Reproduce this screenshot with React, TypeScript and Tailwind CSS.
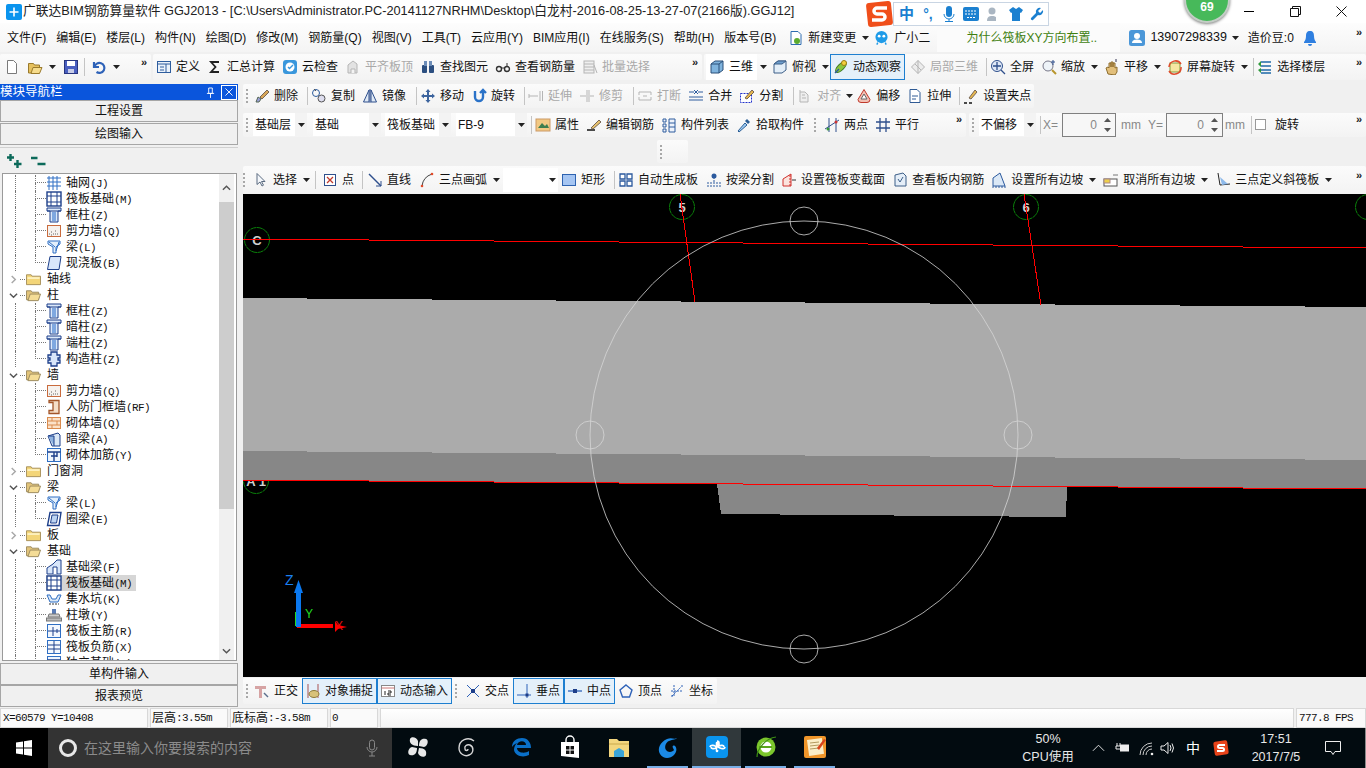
import React, { FC, ReactNode } from "react";

const B = "#2f6fc4";
const D = "#1d3f8a";
const G = "#b5b5b5";

const icons: Record<string, ReactNode> = {
  file: <path d="M3.5 1.5h6l3 3v10h-9z" fill="#fff" stroke="#7a7a7a" />,
  open: (<><path d="M1.5 4.5h5l1 1.500h5v8h-11z" fill="#e6c15e" stroke="#9a7a2c" /><path d="M4 14.500l2-6h9l-2.500 6z" fill="#f6dc8c" stroke="#9a7a2c" /></>),
  save: (<><rect x="1.500" y="1.500" width="13" height="13" fill="#4a5fc0" stroke="#27357f" /><rect x="4" y="2" width="8" height="5" fill="#fff" /><rect x="5" y="10" width="6" height="4" fill="#c8cde8" /></>),
  undo: <path d="M3 3v5h5M3.500 8a5 5 0 1 1 2 5" fill="none" stroke="#2e62b8" strokeWidth="2.200" />,
  define: (<><rect x="1.500" y="2.500" width="13" height="11" fill="#eaf2fb" stroke="#2e5d9e" /><path d="M1.500 5h13M4 8h4M4 11h4M10 5v8" stroke="#2e5d9e" /></>),
  sigma: <path d="M12 3H4l4.500 5L4 13h8" fill="none" stroke="#222" strokeWidth="1.800" />,
  cloud: (<><rect x="1" y="1" width="14" height="14" rx="3" fill="#3a97dc" /><circle cx="8" cy="8" r="4.500" fill="#fff" /><path d="M6 8l1.500 1.500L11 6" fill="none" stroke="#3a97dc" strokeWidth="1.400" /></>),
  alignG: (<><path d="M3 14V6l5-4 4 3v9z" fill="#e2e2e2" stroke={G} /><path d="M6 14v-4h4v4" fill="#f4f4f4" stroke={G} /></>),
  binoc: (<><rect x="2" y="6" width="5" height="8" rx="1" fill="#2c4f80" /><rect x="9" y="6" width="5" height="8" rx="1" fill="#2c4f80" /><rect x="4" y="2" width="3" height="5" fill="#6d8db8" /><rect x="9" y="2" width="3" height="5" fill="#6d8db8" /></>),
  glasses: (<><circle cx="4" cy="10" r="2.500" fill="none" stroke="#333" strokeWidth="1.400" /><circle cx="12" cy="10" r="2.500" fill="none" stroke="#333" strokeWidth="1.400" /><path d="M6 9h4M12 8V4" stroke="#333" /></>),
  batch: (<><rect x="2" y="2" width="10" height="12" fill="#efefef" stroke={G} /><path d="M2 5h10M2 8h10M2 11h10M12 6l3 8" stroke={G} /></>),
  cube: (<><path d="M2 5l4-3h8v9l-4 3H2z" fill="#7fb3dd" stroke="#2a4f78" /><path d="M2 5h8v9M10 5l4-3" fill="none" stroke="#2a4f78" /></>),
  cubeT: (<><path d="M2 5l4-3h8v9l-4 3H2z" fill="#e3eef8" stroke="#3d5f88" /><path d="M2 5h8l4-3H6z" fill="#6f9fce" stroke="#3d5f88" /></>),
  orbit: (<><ellipse cx="8" cy="8" rx="7" ry="3" transform="rotate(-45 8 8)" fill="#8cc63f" stroke="#3b7a1e" /><circle cx="11" cy="4" r="2.500" fill="#f2cf3e" stroke="#9c7d16" /><path d="M2 14l4-4" stroke="#2c5a9e" strokeWidth="1.500" /></>),
  local: <path d="M8 1.500l6.500 6.500L8 14.500 1.500 8zM5 5l6 6M8 1.500v13" fill="#ececec" stroke={G} />,
  full: (<><circle cx="7" cy="7" r="5.500" fill="#dfe8f6" stroke="#2e4f8c" /><path d="M7 3v8M3 7h8M11 11l4 4" stroke="#2e4f8c" strokeWidth="1.300" /></>),
  zoom: (<><circle cx="7" cy="7" r="5" fill="#eef3f8" stroke="#778" /><path d="M11 11l4 4" stroke="#b8962e" strokeWidth="2" /><path d="M12 1v5M10 3h4" stroke="#2e4f8c" /></>),
  pan: (<><path d="M4 15l-2-6 2-1 1 1V4h2v4-5h2v5-4h2v5l2-1v5l-2 3z" fill="#e2bf7b" stroke="#8d6d2e" /><path d="M12 0v3" stroke="#335" /></>),
  rotate: (<><rect x="3" y="4" width="10" height="9" fill="#f6e6a2" stroke="#7f9c3e" /><path d="M2 8a6.500 6.500 0 0 1 12-3M14 8a6.500 6.500 0 0 1-12 4" fill="none" stroke="#e04a2a" strokeWidth="1.500" /></>),
  floor: (<><path d="M4 3h10M4 7h10M4 11h10M4 14h10" stroke="#1e6aa8" strokeWidth="1.500" /><path d="M1 5l3-3v6zM1 11l3 3V9z" fill="#2f9a3c" /></>),
  erase: (<><path d="M2 14l2-5 3 2-2 3z" fill="#9aa0d8" stroke="#565" /><path d="M6 9l7-7 2 2-7 7z" fill="#d8a657" stroke="#765" /></>),
  copy: (<><circle cx="5" cy="5" r="3.500" fill="none" stroke="#2e5d9e" /><circle cx="10.500" cy="10.500" r="3.500" fill="#dde" stroke="#555" /><path d="M3 1l2 2" stroke="#555" /></>),
  mirror: (<><path d="M7 2L1.500 14H7zM9 2l5.500 12H9z" fill="#dfe9f5" stroke="#2e4f8c" /><path d="M8 1v14" stroke="#2e4f8c" /></>),
  move: <path d="M8 1l2.500 3H9v3h3V5.500L15 8l-3 2.500V9H9v3h1.500L8 15l-2.500-3H7V9H4v1.500L1 8l3-2.500V7h3V4H5.500z" fill="#3c649e" />,
  rot: <path d="M4 3v6a4 4 0 0 0 8 0V3M9 5l3-3 3 3" fill="none" stroke="#2a72c8" strokeWidth="2.400" />,
  extend: <path d="M1 8h9M1 6v4M12 3v10M14.500 3v10" fill="none" stroke={G} />,
  trim: <path d="M8 2v12M10 2v12M1 8h6M11 8h4" fill="none" stroke={G} />,
  brk: <path d="M2 4h12M2 12h12M2 4v3M14 4v3M2 12V9M14 12V9M6 8h4" fill="none" stroke={G} />,
  merge: (<><path d="M1 4h5M10 4h5M1 12h14M1 9h14" stroke="#2e5d9e" /><path d="M6 2l2 2-2 2M10 2L8 4l2 2" fill="none" stroke="#2e5d9e" /></>),
  split: (<><rect x="1.500" y="5.500" width="11" height="9" fill="#fff" stroke="#2233cc" strokeDasharray="2 1" /><path d="M6 10l7-8 2 2-7 7z" fill="#e8b84e" stroke="#765" /></>),
  alignH: <path d="M3 2v12h8V7l-3-3H3M5 7h3M5 10h4" fill="#eee" stroke={G} />,
  offset: (<><path d="M8 1.500l6 10q0 3-3 3H5q-3 0-3-3z" fill="#f1c0b4" stroke="#c0392b" /><path d="M8 6l3 5H5z" fill="#fff" stroke="#666" /></>),
  stretch: <path d="M3 1.500h7l3 3v10H3zM5 8h6M5 11h4" fill="#fff" stroke="#2f5a94" />,
  clip: (<><path d="M6 10l6-8 2 2-6 7z" fill="#e8b84e" stroke="#765" /><path d="M1 15h3M6 15h3" stroke="#111" strokeWidth="1.500" /></>),
  prop: (<><rect x="1" y="2" width="14" height="12" fill="#f2c983" stroke="#c96" /><path d="M3 11l4-5 3 3 2-2 2 4z" fill="#3d7e4e" /></>),
  edit: (<><path d="M1 13h8" stroke="#111" strokeWidth="1.500" /><path d="M5 11l8-8 2 2-8 7z" fill="#e8c36e" stroke="#765" /></>),
  list: <path d="M2 2h3v3H2zM2 7h3v3H2zM2 12h3v3H2zM8 2h6v13H8zM8 6h6M8 10h6" fill="#eef3fb" stroke="#2e5d9e" />,
  pick: (<><path d="M2 14l7-8 2 2-8 7z" fill="#9ecbf2" stroke="#2d5f96" /><path d="M9 4l2-2 3 3-2 2z" fill="#2d5f96" /></>),
  two: (<><path d="M5 1v14M12 1v14M1 12L15 3" stroke="#2e4f8c" /><circle cx="4" cy="12" r="1.500" fill="#3a9a3a" /><circle cx="12" cy="5" r="1.500" fill="#c33" /></>),
  para: <path d="M5 1v14M11 1v14M1 5h14M1 11h14" stroke="#2e4f8c" strokeWidth="1.300" />,
  cursor: <path d="M4 1.500v11l3-2.500 2 4 1.500-.8-2-3.700H12z" fill="#f4f7fb" stroke="#5b6b80" />,
  point: (<><rect x="2.500" y="2.500" width="11" height="11" fill="#fff" stroke="#2e4f8c" /><path d="M5 5l6 6M11 5l-6 6" stroke="#c0392b" strokeWidth="1.300" /></>),
  line: (<><path d="M2 2l12 12" stroke="#2e4f8c" strokeWidth="1.400" /><path d="M9 14h5V9" fill="none" stroke="#2e4f8c" /></>),
  arc: (<><path d="M3 14Q4 5 13 2" fill="none" stroke="#444" /><circle cx="3" cy="14" r="1.300" fill="#e04a2a" /><circle cx="13" cy="2" r="1.300" fill="#e04a2a" /></>),
  rect: <rect x="1.500" y="2.500" width="13" height="11" fill="#a5c5f2" stroke="#2d62b0" />,
  auto: <path d="M2 2h5v5H2zM9 2h5v5H9zM2 9h5v5H2zM9 9h5v5H9z" fill="#fff" stroke="#2c5a9e" strokeWidth="1.300" />,
  beam: (<><path d="M1 11h14M1 14h14M8 5v6" stroke="#2c5a9e" strokeDasharray="2 1" /><circle cx="8" cy="4" r="2.500" fill="#2c5a9e" /></>),
  varsec: (<><path d="M2 14V7l8-5v12z" fill="#fbe3dd" stroke="#d0312d" /><path d="M9 3v12" stroke="#d0312d" strokeDasharray="2 1" /><path d="M11 8h4" stroke="#333" /></>),
  view: (<><path d="M3 3l8-2 3 3v10H3z" fill="#e5eef8" stroke="#3d5f88" /><path d="M6 7l2 3 3-5" fill="none" stroke="#3d5f88" /></>),
  slope: (<><path d="M2 14V6l7-5 5 13z" fill="#dbe8f6" stroke="#2c5a9e" /><path d="M1 15h14" stroke="#2c5a9e" strokeDasharray="2 1" /></>),
  noslope: (<><rect x="1" y="7" width="13" height="7" fill="#fff" stroke="#555" /><rect x="1" y="7" width="6" height="4" fill="#eed04a" stroke="#a88" /><path d="M10 3h5" stroke="#777" /></>),
  three: (<><path d="M3 1l2 12 10-1" fill="none" stroke="#222" /><path d="M5 5l2 8 6-1z" fill="#8db9ea" /></>),
  ortho: (<><path d="M1 3h11v3H8v9H5V6H1z" fill="#d6a3a3" /><path d="M10 10l4 4" stroke="#5a6e8c" strokeWidth="1.500" /></>),
  snap: (<><path d="M3 1v14M13 1v14" stroke="#a55" /><ellipse cx="9" cy="11" rx="5" ry="3.500" fill="#d8c27a" stroke="#8d7a3a" /></>),
  dyn: (<><rect x="1.500" y="2.500" width="13" height="11" fill="#fff" stroke="#888" /><path d="M1.500 5h13" stroke="#c77" /><path d="M5 8v4M8 8h3v2H8v2h3" fill="none" stroke="#222" /></>),
  cross: (<><path d="M2 2l12 12M14 2L2 14" stroke="#2e62b8" /><rect x="6" y="6" width="4" height="4" fill="#1d3f8a" /></>),
  perp: (<><path d="M1 12h14M11 1v14" stroke="#2e62b8" /><rect x="9.500" y="10.500" width="3" height="3" fill="#1d3f8a" /></>),
  mid: (<><path d="M1 8h14" stroke="#2e62b8" strokeWidth="1.300" /><rect x="6" y="6" width="4" height="4" fill="#1d3f8a" /></>),
  vertex: <path d="M8 2l6 5-2.500 7h-7L2 7z" fill="none" stroke="#2e62b8" strokeWidth="1.400" />,
  coord: <path d="M2 8h12M5 2v12M3 13l9-9M13 2v2M2 13h2" fill="none" stroke="#2e62b8" strokeDasharray="2 1" />,
  grid: <path d="M3 1v14M7 1v14M11 1v14M1 3h14M1 7h14M1 11h14" stroke={B} />,
  raft: (<><rect x="1" y="1" width="14" height="14" fill="#fff" stroke={D} strokeWidth="1.400" /><path d="M1 5h14M1 11h14M5 1v14M11 1v14" stroke={D} /></>),
  column: (<><path d="M1 1h14v3h-3v11H4V4H1z" fill="#dce9fa" stroke={D} /><path d="M1 4h14" stroke={D} /><rect x="6" y="5" width="4" height="9" fill="#7fa8e0" /></>),
  shear: (<><rect x="1.500" y="2.500" width="13" height="11" fill="#f6f2ee" stroke="#c96b3d" /><path d="M3 11h1M5 9h1M7 11h1M9 8h1M11 11h1M5 12h1M9 11h1" stroke="#666" /></>),
  fbeam: (<><path d="M2 2h12v3l-4 3v6H7V8L2 5z" fill="#e3effb" stroke={B} /><path d="M3 3l6 5M13 3l-3 9" stroke={B} /></>),
  slab: <path d="M4 1.500h11l-2 13H1.500z" fill="#d8e6fa" stroke={D} />,
  cons: <path d="M5 1h6v3h3v3h-2v2h2v3h-3v3H5v-3H2V9h2V7H2V4h3z" fill="#d8e6fa" stroke={D} strokeWidth="1.300" />,
  door: <path d="M3 1.500h10v13H3v-3h4v-8H3z" fill="#f5dfc8" stroke="#a3562a" strokeWidth="1.300" />,
  brick: (<><rect x="1.500" y="2.500" width="13" height="11" fill="#fbe2c9" stroke="#d98b4e" /><path d="M1.500 6h13M1.500 10h13M6 2.500V6M11 6v4M6 10v3.500" stroke="#d98b4e" /></>),
  hidden: (<><path d="M2 5l10-3 2 2v11H6z" fill="#dbe8f6" stroke={D} /><path d="M2 5h6v10" fill="#8fb3df" stroke={D} /></>),
  reinf: (<><rect x="1.500" y="1.500" width="13" height="13" fill="#eef5fd" stroke={B} /><path d="M1.500 5h13M8 5v9M5 9h6M11 5v5" stroke={D} strokeWidth="1.400" /></>),
  loop: (<><path d="M4 1.500h11l-2 13H1.500z" fill="#fff" stroke={D} strokeWidth="1.400" /><path d="M6 4h6l-1.500 8h-6z" fill="#bcd4f2" stroke={D} /></>),
  footb: (<><path d="M1 15V9l6-4 4-4h4v14z" fill="#d8e6fa" stroke={D} /><path d="M7 15V8h4v7" fill="#fff" stroke={D} /></>),
  pit: (<><path d="M1 4h3l2 4h4l2-4h3l-3 7H4z" fill="#dbe8f6" stroke={B} /><path d="M3 13h10" stroke="#999" strokeDasharray="2 1" strokeWidth="2" /></>),
  pier: (<><rect x="6" y="2" width="4" height="5" fill="#5a7cb5" /><path d="M3 7h10l1 3H2z" fill="#ccc" stroke="#777" /><rect x="0.500" y="11" width="15" height="3" fill="#bbb" stroke="#777" /></>),
  main: (<><rect x="1.500" y="1.500" width="13" height="13" fill="#f2f7fe" stroke={B} /><path d="M2 8h12M7 4v9M11 6v4" stroke={D} /></>),
  neg: (<><rect x="1.500" y="1.500" width="13" height="13" fill="#f2f7fe" stroke={B} /><path d="M2 6h12M2 10h12M8 2v12" stroke={D} /></>),
};

const Icon: FC<{ n: string }> = ({ n }) => (
  <svg viewBox="0 0 16 16" className="w-4 h-4 shrink-0">
    {icons[n]}
  </svg>
);

const Arrow: FC<{ className?: string }> = ({ className = "w-[10px]" }) => (
  <span className={`flex items-center justify-center shrink-0 ${className}`}>
    <svg viewBox="0 0 7 4" className="w-[7px] h-[4px]">
      <path d="M0 0h7L3.500 4z" fill="#222" />
    </svg>
  </span>
);

const Sep: FC<{ className?: string }> = ({ className = "ml-1" }) => <span className={`w-px h-[18px] bg-[#c4c4c4] shrink-0 ${className}`}></span>;

const Grip: FC<{ className?: string }> = ({ className = "ml-[3px] mr-[2px]" }) => (
  <span className={`flex flex-col gap-[2px] w-[5px] shrink-0 ${className}`}>
    <i className="block w-[2px] h-[2px] bg-[#a8a8a8]"></i>
    <i className="block w-[2px] h-[2px] bg-[#a8a8a8]"></i>
    <i className="block w-[2px] h-[2px] bg-[#a8a8a8]"></i>
    <i className="block w-[2px] h-[2px] bg-[#a8a8a8]"></i>
  </span>
);

const More = () => <span className="ml-auto pr-1 -mt-[10px] text-[11px] leading-none text-[#222] font-bold shrink-0">»</span>;

const T: FC<{ i: string; t: string; gray?: boolean; arrow?: boolean; on?: boolean }> = ({ i, t, gray, arrow, on }) => (
  <>
    <span
      className={`flex items-center gap-1 h-full pl-[3px] pr-1 shrink-0 whitespace-nowrap ${gray ? "text-[#a9a9a9]" : "text-[#111]"} ${
        on ? "outline outline-1 -outline-offset-1 outline-[#1d7fd0] bg-[#e4f0fa]" : ""
      }`}
    >
      <Icon n={i} />
      {t}
    </span>
    {arrow && <Arrow />}
  </>
);

const Bar: FC<{ className?: string; children: ReactNode }> = ({ className = "", children }) => (
  <div className={`flex items-center rounded-[2px] bg-gradient-to-b from-[#fbfbfb] to-[#f3f3f3] ${className}`}>{children}</div>
);

const Combo: FC<{ t: string; className: string }> = ({ t, className }) => (
  <span className={`flex items-center h-[23px] bg-white text-[#111] pl-[2px] shrink-0 ${className}`}>
    <span className="flex-1 whitespace-nowrap">{t}</span>
    <Arrow className="w-[12px] h-full bg-[#f3f3f3]" />
  </span>
);

const Spin: FC<{ className: string }> = ({ className }) => (
  <span className={`flex items-center justify-end h-[24px] border border-[#808080] bg-[#f7f7f7] text-[#888] shrink-0 ${className}`}>
    0
    <span className="flex flex-col items-center justify-between h-full py-[4px] w-[15px] ml-[3px]">
      <svg viewBox="0 0 7 4" className="w-[7px] h-[4px]"><path d="M0 4h7L3.500 0z" fill="#555" /></svg>
      <svg viewBox="0 0 7 4" className="w-[7px] h-[4px]"><path d="M0 0h7L3.500 4z" fill="#555" /></svg>
    </span>
  </span>
);

const PanelBtn: FC<{ t: string }> = ({ t }) => (
  <div className="flex items-center justify-center h-[22px] border border-[#a6a6a6] bg-[#f0f0f0] text-[#111] shrink-0">{t}</div>
);

type Row = { l: 1 | 2; t: string; k?: string; s?: string; open?: boolean; last?: boolean; sel?: boolean };

const tree: Row[] = [
  { l: 2, k: "grid", t: "轴网", s: "(J)" },
  { l: 2, k: "raft", t: "筏板基础", s: "(M)" },
  { l: 2, k: "column", t: "框柱", s: "(Z)" },
  { l: 2, k: "shear", t: "剪力墙", s: "(Q)" },
  { l: 2, k: "fbeam", t: "梁", s: "(L)" },
  { l: 2, k: "slab", t: "现浇板", s: "(B)", last: true },
  { l: 1, t: "轴线" },
  { l: 1, t: "柱", open: true },
  { l: 2, k: "column", t: "框柱", s: "(Z)" },
  { l: 2, k: "column", t: "暗柱", s: "(Z)" },
  { l: 2, k: "column", t: "端柱", s: "(Z)" },
  { l: 2, k: "cons", t: "构造柱", s: "(Z)", last: true },
  { l: 1, t: "墙", open: true },
  { l: 2, k: "shear", t: "剪力墙", s: "(Q)" },
  { l: 2, k: "door", t: "人防门框墙", s: "(RF)" },
  { l: 2, k: "brick", t: "砌体墙", s: "(Q)" },
  { l: 2, k: "hidden", t: "暗梁", s: "(A)" },
  { l: 2, k: "reinf", t: "砌体加筋", s: "(Y)", last: true },
  { l: 1, t: "门窗洞" },
  { l: 1, t: "梁", open: true },
  { l: 2, k: "fbeam", t: "梁", s: "(L)" },
  { l: 2, k: "loop", t: "圈梁", s: "(E)", last: true },
  { l: 1, t: "板" },
  { l: 1, t: "基础", open: true },
  { l: 2, k: "footb", t: "基础梁", s: "(F)" },
  { l: 2, k: "raft", t: "筏板基础", s: "(M)", sel: true },
  { l: 2, k: "pit", t: "集水坑", s: "(K)" },
  { l: 2, k: "pier", t: "柱墩", s: "(Y)" },
  { l: 2, k: "main", t: "筏板主筋", s: "(R)" },
  { l: 2, k: "neg", t: "筏板负筋", s: "(X)" },
  { l: 2, k: "reinf", t: "独立基础", s: "(D)" },
];

const Mono: FC<{ children: ReactNode }> = ({ children }) => (
  <span className="font-['Liberation_Mono',monospace] text-[11px] tracking-[-0.6px]">{children}</span>
);

const TreeRow: FC<{ r: Row }> = ({ r }) =>
  r.l === 1 ? (
    <div className="flex items-center h-4 text-[#111]">
      <span className="flex items-center justify-center w-[11px] ml-[5px] shrink-0">
        <svg viewBox="0 0 10 10" className="w-[9px] h-[9px]">
          {r.open ? (
            <path d="M1 3l4 4 4-4" fill="none" stroke="#555" strokeWidth="1.600" />
          ) : (
            <path d="M3 1l4 4-4 4" fill="none" stroke="#a8a8a8" strokeWidth="1.600" />
          )}
        </svg>
      </span>
      <span className="w-[5px] border-t border-dotted border-[#777] ml-[1px] mr-[1px] shrink-0"></span>
      <svg viewBox="0 0 16 14" className="w-[15px] h-[14px] shrink-0">
        {r.open ? (
          <>
            <path d="M0.500 2.500h5l1 1.500h7v8H.500z" fill="#e2c47a" stroke="#9b8a5e" />
            <path d="M2 13l2.500-7h11L13 13z" fill="#f4dc96" stroke="#9b8a5e" />
          </>
        ) : (
          <>
            <path d="M0.500 2.500h5l1 1.500h9v9H.500z" fill="#f3d578" stroke="#a58f5a" />
            <path d="M1.500 5h13v2h-13z" fill="#fdf0bd" />
          </>
        )}
      </svg>
      <span className="ml-[6px]">{r.t}</span>
    </div>
  ) : (
    <div className="flex items-center h-4 text-[#111]">
      <span className="w-5 h-full ml-[12px] border-l border-dotted border-[#777] shrink-0"></span>
      <span className="w-[11px] h-full shrink-0 flex flex-col">
        <span className="h-1/2 border-l border-b border-dotted border-[#777]"></span>
        <span className={`h-1/2 ${r.last ? "" : "border-l border-dotted border-[#777]"}`}></span>
      </span>
      <span className={`flex items-center h-full pr-1 gap-1 ${r.sel ? "bg-[#d6d6d6]" : ""}`}>
        <Icon n={r.k as string} />
        <span>
          {r.t}
          <Mono>{r.s}</Mono>
        </span>
      </span>
    </div>
  );

const Canvas = () => (
  <svg viewBox="243 194 1123 483" className="block w-full h-[483px] bg-black shrink-0">
    {[
      [682, 207, "5"],
      [1026, 207, "6"],
      [257, 240, "C"],
      [256, 481, "A 1"],
      [1368, 207, ""],
    ].map(([x, y, t]) => (
      <g key={String(x)}>
        <circle cx={x as number} cy={y as number} r="12.500" fill="none" stroke="#0a7f0a" strokeDasharray="6 0.500" />
        <text x={x as number} y={(y as number) + 5} textAnchor="middle" fontSize="13" fontWeight="700" fill="#d0d0d0" fontFamily="Liberation Sans">
          {t}
        </text>
      </g>
    ))}
    <g shapeRendering="crispEdges">
      <polygon points="243,298 1366,307 1366,460 243,451" fill="#ababab" />
      <polygon points="243,451 1366,460 1366,489 243,480" fill="#878787" />
      <polygon points="717,484 1067,487 1066,517 721,514" fill="#878787" />
      <line x1="243" y1="239" x2="1366" y2="248" stroke="#f00" />
      <line x1="243" y1="480" x2="1366" y2="489" stroke="#f00" />
      <line x1="680" y1="194" x2="695" y2="302" stroke="#f00" />
      <line x1="1024" y1="194" x2="1041" y2="305" stroke="#f00" />
    </g>
    <circle cx="804" cy="435" r="214" fill="none" stroke="#d6d6d6" strokeWidth="0.800" />
    <circle cx="804" cy="221" r="14" fill="none" stroke="#d6d6d6" strokeWidth="0.800" />
    <circle cx="590" cy="435" r="14" fill="none" stroke="#d6d6d6" strokeWidth="0.800" />
    <circle cx="1018" cy="435" r="14" fill="none" stroke="#d6d6d6" strokeWidth="0.800" />
    <circle cx="804" cy="649" r="14" fill="none" stroke="#d6d6d6" strokeWidth="0.800" />
    <line x1="296" y1="612" x2="296" y2="626" stroke="#22dd22" strokeWidth="2" />
    <text x="335" y="630" fontSize="12" fill="#e01010" fontFamily="Liberation Sans">X</text>
    <rect x="297" y="624" width="36" height="4" fill="#f00" />
    <polygon points="335,621 338,625 347,627 338,629 335,632" fill="#f00" />
    <rect x="296" y="589" width="5" height="38" fill="#0a78ef" />
    <polygon points="298.500,580 303,593 294,593" fill="#0a78ef" />
    <text x="285" y="585" fontSize="14" fill="#1a7ff0" fontFamily="Liberation Sans">Z</text>
    <text x="305" y="618" fontSize="12" fill="#22dd22" fontFamily="Liberation Sans">Y</text>
  </svg>
);

const taskIcons: ReactNode[] = [
  <g key="fan" fill="#e8e8e8"><path d="M12 11C6 11 3 8 4 4c1-3 7-2 8 2zM13 11c0-6 3-8 7-7 3 1 2 7-2 8zM13 13c6 0 8 3 7 7-1 3-7 2-8-2zM11 13c0 6-3 8-7 7-3-1-2-7 2-8z" /></g>,
  <path key="sp" d="M19 6C13 1 4 5 4 13c0 6 6 9 10 7 5-2 5-8 1-10-3-1-6 1-5 4 0 2 3 2 3 0" fill="none" stroke="#d5d5d5" strokeWidth="1.400" />,
  <path key="ed" d="M3 12C3 6 8 3 13 3c6 0 9 5 9 10H8c0 5 8 6 12 3v4c-6 3-14 1-15-5 0-3 1-5 3-7-3 1-4 3-5 4zM8 10h9c0-5-8-5-9 0z" fill="#0a70c8" />,
  <g key="st"><path d="M8 7V5a4 4 0 0 1 8 0v2" fill="none" stroke="#fff" strokeWidth="1.400" /><path d="M3 7h18v16L3 21z" fill="#fff" /><path d="M8 11h3.500v3.500H8zM12.500 11H16v3.500h-3.500zM8 15.500h3.500V19H8zM12.500 15.500H16V19h-3.500z" fill="#111" /></g>,
  <g key="ex"><path d="M2 4h8l2 2h10v16H2z" fill="#f3d67e" /><path d="M2 9h20" stroke="#caa94a" /><path d="M7 22v-6l5-3 5 3v6z" fill="#3ba4d8" /></g>,
  <path key="gl" d="M21 3c-3 2-5-1-10 1C4 7 1 14 4 19c3 5 10 5 14 1 3-3 3-7 1-9-2-1-3 0-2 2l1 2c-1 2-6 3-8 0-2-3 0-8 3-9 4-2 7-1 8-3z" fill="#1b8ae6" />,
  <g key="ap"><rect x="1" y="1" width="22" height="22" rx="4" fill="#0a94ee" /><path d="M12 6a2 2 0 0 1 2 2v2h-1.500V8a.5.5 0 0 0-1 0v8a.5.5 0 0 0 1 0v-1M5 12c0-2 4-2 5-1l1 1m8 0c0-2-3-2-5-1l-2 1m-6 0c0 2 3 2 5 1l1-1m8 0c0 2-3 2-5 1l-2-1" fill="none" stroke="#fff" strokeWidth="1.600" /></g>,
  <g key="ie"><circle cx="12" cy="12" r="9.500" fill="#7bc62d" /><circle cx="12" cy="12" r="5.500" fill="#fff" /><path d="M5 11h13v2H5z" fill="#5aa51c" /><path d="M3 22C3 14 12 3 22 2" fill="none" stroke="#3c8c14" strokeWidth="1.200" /></g>,
  <g key="no"><rect x="1" y="1" width="22" height="22" rx="2" fill="#f0962a" /><rect x="5" y="4" width="15" height="16" fill="#fbeec8" transform="rotate(-8 12 12)" /><path d="M7 8l9-1M7 11l9-1M7 14l9-1" stroke="#b39a60" /><path d="M14 13l7-9 2 1-7 10z" fill="#d9441c" /></g>,
];

const taskCell = ["w-[48px] ml-[2px]", "w-[50px]", "w-[49px] ml-[4px]", "w-[49px]", "w-[49px]", "w-[49px]", "w-[49px] bg-[#30383b]", "w-[49px]", "w-[49px]"];

const Tray: FC<{ className: string; children: ReactNode }> = ({ className, children }) => (
  <span className={`flex items-center justify-center shrink-0 ${className}`}>{children}</span>
);

const App: FC = () => (
  <div className="relative flex flex-col w-[1366px] h-[768px] overflow-hidden bg-[#f0f0f0] text-[12px] leading-none font-['Liberation_Sans','Noto_Sans_CJK_SC',sans-serif]">
    {/* title bar */}
    <div className="flex items-center h-[23px] bg-white shrink-0">
      <svg viewBox="0 0 16 16" className="w-4 h-4 ml-[6px] mr-[1px] shrink-0">
        <rect width="16" height="16" rx="2" fill="#0a94ee" />
        <path d="M8 3.500v9M3.500 8h9" stroke="#fff" strokeWidth="1.600" />
      </svg>
      <span className="text-[12.75px] text-[#222] whitespace-nowrap">
        广联达BIM钢筋算量软件 GGJ2013 - [C:\Users\Administrator.PC-20141127NRHM\Desktop\白龙村-2016-08-25-13-27-07(2166版).GGJ12]
      </span>
      <div className="flex ml-auto pr-[2px]">
        <Tray className="w-[46px] h-[23px]"><span className="w-[10px] border-t border-black"></span></Tray>
        <Tray className="w-[46px] h-[23px]">
          <svg viewBox="0 0 11 11" className="w-[11px] h-[11px]"><path d="M.5 2.500h8v8h-8zM2.500 2.500v-2h8v8h-2" fill="none" stroke="#111" /></svg>
        </Tray>
        <Tray className="w-[46px] h-[23px]">
          <svg viewBox="0 0 11 11" className="w-[11px] h-[11px]"><path d="M.5.500l10 10M10.500.500l-10 10" stroke="#111" /></svg>
        </Tray>
      </div>
    </div>

    {/* menu bar */}
    <div className="flex items-center h-[29px] shrink-0 bg-gradient-to-b from-[#fdfdfd] to-[#f4f4f4] pl-[2px] text-[#111]">
      {["文件(F)", "编辑(E)", "楼层(L)", "构件(N)", "绘图(D)", "修改(M)", "钢筋量(Q)", "视图(V)", "工具(T)", "云应用(Y)", "BIM应用(I)", "在线服务(S)", "帮助(H)", "版本号(B)"].map((m) => (
        <span key={m} className="px-[5px] whitespace-nowrap">{m}</span>
      ))}
      <span className="flex items-center gap-1 ml-[7px] whitespace-nowrap">
        <svg viewBox="0 0 16 16" className="w-4 h-4"><path d="M3 1.500h7l3 3v10H3z" fill="#fff" stroke="#2e6cb0" /><circle cx="9" cy="11" r="3" fill="#5cab2d" /></svg>
        新建变更
      </span>
      <Arrow className="w-[18px]" />
      <span className="flex items-center gap-[5px] whitespace-nowrap">
        <svg viewBox="0 0 16 16" className="w-[15px] h-4"><circle cx="8" cy="7" r="6.500" fill="#1e9be8" /><circle cx="5.500" cy="6" r="1.500" fill="#fff" /><circle cx="10.500" cy="6" r="1.500" fill="#fff" /><path d="M4 13l-1 2M12 13l1 2" stroke="#1e9be8" strokeWidth="1.500" /></svg>
        广小二
      </span>
      <span className="flex items-center w-[183px] h-[29px] ml-[7px] pl-[29px] bg-[#fbfbfb] text-[#3f7f10] whitespace-nowrap shrink-0">为什么筏板XY方向布置..</span>
      <span className="flex items-center h-[26px] ml-[5px] pl-[4px] gap-[5px] flex-1">
        <svg viewBox="0 0 16 16" className="w-4 h-4 shrink-0"><rect width="16" height="16" rx="2.500" fill="#4b97d8" /><circle cx="8" cy="6" r="3" fill="#fff" /><path d="M3 13c0-3 3-3.500 5-3.500s5 .5 5 3.500z" fill="#fff" /></svg>
        <span className="text-[12.5px]">13907298339</span>
        <Arrow className="w-[8px]" />
        <span className="ml-[3px]">造价豆:0</span>
        <svg viewBox="0 0 16 16" className="w-4 h-4 ml-[3px] shrink-0"><path d="M8 1c3 0 4 2 4 5 0 3 1 5 2 6v1H2v-1c1-1 2-3 2-6 0-3 1-5 4-5z" fill="#2f7fe0" /><path d="M6 14h4a2 2 0 0 1-4 0z" fill="#2f7fe0" /></svg>
        <More />
      </span>
    </div>

    {/* main toolbar */}
    <div className="flex items-start h-[32px] pt-[2px] shrink-0 gap-[2px]">
      <Bar className="h-[26px] w-[151px] pl-[1px]">
        <T i="file" t="" />
        <T i="open" t="" arrow />
        <span className="w-[3px]"></span>
        <T i="save" t="" />
        <Sep className="ml-[1px]" />
        <span className="w-[3px]"></span>
        <T i="undo" t="" arrow />
        <More />
      </Bar>
      <Bar className="h-[26px] w-[549px]">
        <T i="define" t="定义" />
        <T i="sigma" t="汇总计算" />
        <T i="cloud" t="云检查" />
        <T i="alignG" t="平齐板顶" gray />
        <T i="binoc" t="查找图元" />
        <T i="glasses" t="查看钢筋量" />
        <T i="batch" t="批量选择" gray />
        <More />
      </Bar>
      <Bar className="h-[26px] flex-1 pl-[2px]">
        <span className="flex h-full bg-white"><T i="cube" t="三维" /></span>
        <Arrow className="w-[12px]" />
        <T i="cubeT" t="俯视" arrow />
        <T i="orbit" t="动态观察" on />
        <span className="w-[2px]"></span>
        <T i="local" t="局部三维" gray />
        <Sep />
        <T i="full" t="全屏" />
        <T i="zoom" t="缩放" arrow />
        <span className="w-[2px]"></span>
        <T i="pan" t="平移" arrow />
        <span className="w-[2px]"></span>
        <T i="rotate" t="屏幕旋转" arrow />
        <Sep />
        <T i="floor" t="选择楼层" />
        <More />
      </Bar>
    </div>

    {/* body */}
    <div className="flex flex-1 min-h-0">
      {/* module navigator */}
      <div className="flex flex-col w-[238px] shrink-0">
        <div className="flex items-center h-4 bg-[#0a55dc] text-white text-[12.5px] shrink-0">
          模块导航栏
          <svg viewBox="0 0 10 12" className="w-[9px] h-[11px] ml-auto mr-[6px]"><path d="M3 1h4v6H3zM1 7h8M5 7v5" fill="none" stroke="#fff" /></svg>
          <span className="flex items-center justify-center w-[16px] h-[15px] mr-[1px] border border-white">
            <svg viewBox="0 0 9 9" className="w-[8px] h-[8px]"><path d="M.5.500l8 8M8.500.500l-8 8" stroke="#fff" /></svg>
          </span>
        </div>
        <PanelBtn t="工程设置" />
        <div className="mt-px"><PanelBtn t="绘图输入" /></div>
        <div className="flex items-center gap-[8px] h-[26px] mt-[2px] pl-[7px] border-t border-[#d0d0d0] shrink-0">
          <svg viewBox="0 0 16 16" className="w-4 h-4"><path d="M3.500 1v7M0 4.500h7M10.500 7v8M7 11h7.500" stroke="#0c6a5a" strokeWidth="2.400" /></svg>
          <svg viewBox="0 0 16 16" className="w-4 h-4"><path d="M0 5h6.500M6.500 11h8" stroke="#0c6a5a" strokeWidth="2.400" /></svg>
        </div>
        <div className="flex h-[488px] ml-[2px] mr-[1px] pr-[2px] border border-[#9a9a9a] bg-white overflow-hidden shrink-0">
          <div className="flex-1 pt-px overflow-hidden">
            {tree.map((r, i) => (
              <TreeRow key={i} r={r} />
            ))}
          </div>
          <div className="flex flex-col w-[15px] bg-[#f0f0f0] shrink-0">
            <span className="flex items-center justify-center h-[28px] shrink-0">
              <svg viewBox="0 0 10 6" className="w-[9px] h-[6px]"><path d="M1 5l4-4 4 4" fill="none" stroke="#555" strokeWidth="1.600" /></svg>
            </span>
            <span className="h-[307px] bg-[#cdcdcd] shrink-0"></span>
            <span className="flex items-end justify-center flex-1 pb-[6px]">
              <svg viewBox="0 0 10 6" className="w-[9px] h-[6px]"><path d="M1 1l4 4 4-4" fill="none" stroke="#555" strokeWidth="1.600" /></svg>
            </span>
          </div>
        </div>
        <div className="mt-[2px]"><PanelBtn t="单构件输入" /></div>
        <PanelBtn t="报表预览" />
      </div>

      {/* drawing area */}
      <div className="flex flex-col flex-1 min-w-0 ml-[5px]">
        <div className="flex items-start h-[26px] shrink-0">
          <Bar className="h-[24px] w-[791px]">
            <Grip className="ml-[3px]" />
            <T i="erase" t="删除" />
            <Sep className="ml-[5px]" />
            <T i="copy" t="复制" />
            <T i="mirror" t="镜像" />
            <Sep className="ml-[6px]" />
            <T i="move" t="移动" />
            <T i="rot" t="旋转" />
            <Sep className="ml-[5px]" />
            <T i="extend" t="延伸" gray />
            <T i="trim" t="修剪" gray />
            <Sep className="ml-[6px]" />
            <T i="brk" t="打断" gray />
            <T i="merge" t="合并" />
            <T i="split" t="分割" />
            <Sep className="ml-[6px]" />
            <T i="alignH" t="对齐" gray />
            <Arrow className="w-[8px]" />
            <T i="offset" t="偏移" />
            <T i="stretch" t="拉伸" />
            <Sep />
            <T i="clip" t="设置夹点" />
          </Bar>
        </div>
        <div className="flex items-center h-[29px] shrink-0 gap-[3px]">
          <Bar className="h-[24px] w-[567px]">
            <Grip />
            <Combo t="基础层" className="w-[54px]" />
            <Combo t="基础" className="w-[68px] ml-[6px]" />
            <Combo t="筏板基础" className="w-[66px] ml-[4px]" />
            <Combo t="FB-9" className="w-[71px] ml-[5px]" />
            <Sep />
            <T i="prop" t="属性" />
            <T i="edit" t="编辑钢筋" />
            <T i="list" t="构件列表" />
            <T i="pick" t="拾取构件" />
          </Bar>
          <Bar className="h-[24px] w-[156px] -ml-[3px]">
            <Grip className="ml-[4px] mr-[2px]" />
            <T i="two" t="两点" />
            <T i="para" t="平行" />
            <More />
          </Bar>
          <Bar className="h-[24px] flex-1 text-[#888]">
            <Grip />
            <Combo t="不偏移" className="w-[57px]" />
            <Sep />
            <span className="ml-[2px] w-[19px]">X=</span>
            <Spin className="w-[54px]" />
            <span className="ml-[5px] w-[27px]">mm</span>
            <span className="w-[18px]">Y=</span>
            <Spin className="w-[57px]" />
            <span className="ml-[2px] w-[26px]">mm</span>
            <span className="w-px h-[18px] bg-[#c4c4c4]"></span>
            <span className="w-[11px] h-[11px] ml-[3px] border border-[#999] bg-white"></span>
            <span className="ml-[9px] text-[#111]">旋转</span>
            <More />
          </Bar>
        </div>
        <div className="flex h-[27px] shrink-0 items-start pl-[414px] pt-px">
          <Bar className="h-[23px] w-[31px]">
            <Grip />
          </Bar>
        </div>
        <Bar className="h-[28px] shrink-0">
          <Grip className="mr-[2px] ml-0" />
          <T i="cursor" t="选择" arrow />
          <Sep className="ml-[4px]" />
          <span className="w-[3px]"></span>
          <T i="point" t="点" />
          <Sep />
          <span className="w-[1px]"></span>
          <T i="line" t="直线" />
          <span className="w-[1px]"></span>
          <T i="arc" t="三点画弧" arrow />
          <span className="flex items-center h-[24px] w-[55px] ml-[2px] bg-white justify-end pr-[1px]"><Arrow /></span>
          <T i="rect" t="矩形" />
          <Sep className="ml-[5px]" />
          <T i="auto" t="自动生成板" />
          <span className="w-[1px]"></span>
          <T i="beam" t="按梁分割" />
          <T i="varsec" t="设置筏板变截面" />
          <T i="view" t="查看板内钢筋" />
          <T i="slope" t="设置所有边坡" arrow />
          <span className="w-[3px]"></span>
          <T i="noslope" t="取消所有边坡" arrow />
          <span className="w-[3px]"></span>
          <T i="three" t="三点定义斜筏板" arrow />
          <More />
        </Bar>
        <Canvas />
        <div className="flex items-center h-[28px] shrink-0">
          <Bar className="h-[26px]">
            <Grip className="ml-[3px]" />
            <T i="ortho" t="正交" />
            <T i="snap" t="对象捕捉" on />
            <T i="dyn" t="动态输入" on />
            <Grip />
            <T i="cross" t="交点" />
            <T i="perp" t="垂点" on />
            <T i="mid" t="中点" on />
            <T i="vertex" t="顶点" />
            <T i="coord" t="坐标" />
          </Bar>
        </div>
      </div>
    </div>

    {/* status bar */}
    <div className="flex h-[20px] mt-[2px] gap-[2px] text-[#111] shrink-0">
      <span className="flex items-center w-[148px] pl-[2px] border border-[#d8d8d8] bg-[#fafafa]"><Mono>X=60579 Y=10408</Mono></span>
      <span className="flex items-center w-[78px] pl-[1px] border border-[#d8d8d8] bg-[#fafafa]">层高<Mono>:3.55m</Mono></span>
      <span className="flex items-center w-[98px] pl-[1px] border border-[#d8d8d8] bg-[#fafafa]">底标高<Mono>:-3.58m</Mono></span>
      <span className="flex items-center w-[48px] pl-[1px] border border-[#d8d8d8] bg-[#fafafa]"><Mono>0</Mono></span>
      <span className="flex-1 border border-[#d8d8d8] bg-gradient-to-b from-white to-[#f4f4f4]"></span>
      <span className="flex items-center w-[70px] pl-[2px] border border-[#d8d8d8] bg-[#fafafa]"><Mono>777.8 FPS</Mono></span>
    </div>

    {/* taskbar */}
    <div className="flex items-center h-[40px] bg-[#020b10] text-[#e8e8e8] shrink-0">
      <Tray className="w-12 h-full bg-black">
        <svg viewBox="0 0 16 16" className="w-4 h-4"><path d="M0 2.500l7-1v6H0zM8 1.300L16 0v7.500H8zM0 8.500h7v6l-7-1zM8 8.500h8V16l-8-1.200z" fill="#fff" /></svg>
      </Tray>
      <div className="flex items-center w-[344px] h-full bg-[#333] shrink-0">
        <span className="w-[18px] h-[18px] ml-[11px] rounded-full border-[3px] border-[#e8e8e8] shrink-0"></span>
        <span className="ml-[7px] text-[14px] text-[#8b8b8b] whitespace-nowrap">在这里输入你要搜索的内容</span>
        <svg viewBox="0 0 14 18" className="w-[14px] h-[18px] ml-auto mr-[13px]"><rect x="4.500" y="1" width="5" height="10" rx="2.500" fill="none" stroke="#888" /><path d="M2 8a5 5 0 0 0 10 0M7 13v4M4 17h6" fill="none" stroke="#888" /></svg>
      </div>
      {taskIcons.map((ic, i) => (
        <div key={i} className={`flex flex-col items-center h-full shrink-0 ${taskCell[i]}`}>
          <span className="flex flex-1 items-center justify-center">
            <svg viewBox="0 0 24 24" className="w-6 h-6">{ic}</svg>
          </span>
          <span className={`h-[2px] ${i === 6 ? "w-[49px] bg-[#78aee6]" : i >= 5 ? "w-[41px] bg-[#78aee6]" : "w-[41px]"}`}></span>
        </div>
      ))}
      <span className="flex-1"></span>
      <span className="flex flex-col items-center gap-[5px] w-12 shrink-0 text-[12.5px] whitespace-nowrap">
        <span>50%</span>
        <span>CPU使用</span>
      </span>
      <Tray className="w-4 ml-[18px]"><svg viewBox="0 0 14 8" className="w-[13px] h-[8px]"><path d="M1 7l6-6 6 6" fill="none" stroke="#eee" /></svg></Tray>
      <Tray className="w-4 ml-2"><svg viewBox="0 0 16 12" className="w-4 h-3"><path d="M3 1v3M6 1v3M2 4h5v3H2z" stroke="#eee" fill="none" /><rect x="6" y="2.500" width="9" height="7" fill="#eee" /></svg></Tray>
      <Tray className="w-4 ml-[9px]"><svg viewBox="0 0 16 16" className="w-4 h-4"><path d="M1 15a12 12 0 0 1 12-12M4 15a9 9 0 0 1 9-9M7 15a6 6 0 0 1 6-6" fill="none" stroke="#ccc" /><circle cx="13" cy="14" r="1.300" fill="#eee" /></svg></Tray>
      <Tray className="w-4 ml-[5px]"><svg viewBox="0 0 16 16" className="w-4 h-4"><path d="M1 6h3l4-3.500v11L4 10H1zM10 5q2 3 0 6M12 3.500q3 4.500 0 9" fill="none" stroke="#eee" /></svg></Tray>
      <Tray className="w-[14px] ml-[10px] text-[14px] text-white">中</Tray>
      <Tray className="w-4 ml-[13px]">
        <svg viewBox="0 0 16 16" className="w-4 h-4"><rect x="1" y="1" width="14" height="14" rx="2" fill="#e8431a" transform="rotate(-8 8 8)" /><path d="M12 5H6.500a1.500 1.500 0 0 0 0 3h3a1.500 1.500 0 0 1 0 3H4" fill="none" stroke="#fff" strokeWidth="2" /></svg>
      </Tray>
      <span className="flex flex-col items-center gap-[6px] w-[52px] ml-[21px] shrink-0 text-[12.5px] whitespace-nowrap">
        <span>17:51</span>
        <span>2017/7/5</span>
      </span>
      <Tray className="w-4 ml-[23px]"><svg viewBox="0 0 16 16" className="w-4 h-4"><path d="M.5 1.500h15v10H10l-2 3-2-3H.5z" fill="none" stroke="#eee" /></svg></Tray>
      <span className="w-px h-full ml-[24px] bg-[#8a8a8a] shrink-0"></span>
    </div>

    {/* IME bar */}
    <div className="absolute left-[866px] top-0 flex items-center h-[27px]">
      <svg viewBox="0 0 28 28" className="w-[28px] h-[28px] shrink-0"><rect x="1" y="2" width="25" height="24" rx="3" fill="#f04e1a" transform="rotate(-6 14 14)" /><path d="M21 8H11a3 3 0 0 0 0 6h5a3 3 0 0 1 0 6H6" fill="none" stroke="#fff" strokeWidth="3.500" /></svg>
      <div className="flex items-center gap-[7px] w-[156px] h-[24px] -ml-px pl-[5px] border border-[#c9d5e3] bg-white text-[#1b80d0]">
        <span className="text-[15px] font-bold">中</span>
        <span className="text-[14px] font-bold w-[14px] text-center">°,</span>
        <svg viewBox="0 0 14 16" className="w-[14px] h-4"><rect x="4" y="0" width="6" height="11" rx="3" fill="#1b80d0" /><path d="M2 8a5 5 0 0 0 10 0M7 13v3M3 15.500h8" fill="none" stroke="#1b80d0" /></svg>
        <svg viewBox="0 0 16 14" className="w-[16px] h-[14px]"><rect width="16" height="14" rx="2" fill="#1b80d0" /><path d="M2 4h12M2 7h12M4 10.500h8" stroke="#fff" strokeDasharray="2 1" /></svg>
        <svg viewBox="0 0 16 16" className="w-4 h-4"><circle cx="6" cy="5" r="3.500" fill="#aab6c2" /><path d="M1 15c0-4 2-5 5-5 2 0 3 .5 4 1v4z" fill="#aab6c2" /></svg>
        <svg viewBox="0 0 14 14" className="w-[14px] h-[14px]"><path d="M4 0L0 3l2 3 1-.5V14h8V5.500L12 6l2-3-4-3-3 2z" fill="#1b80d0" /></svg>
        <svg viewBox="0 0 14 14" className="w-[14px] h-[14px]"><path d="M13 3l-3 3-2-2 3-3a4 4 0 0 0-5 5L1 11a1.500 1.500 0 0 0 2 2l5-5a4 4 0 0 0 5-5z" fill="#1b80d0" /></svg>
      </div>
    </div>

    {/* update badge */}
    <div className="absolute left-[1184px] -top-[23px] flex items-end justify-center w-[46px] h-[46px] pb-[8px] rounded-full bg-[#47b95a] border-2 border-[#c4cdc6] shadow-[0_1px_3px_rgba(0,0,0,0.5)] text-[12px] font-bold text-white">
      69
    </div>
  </div>
);

export default App;
